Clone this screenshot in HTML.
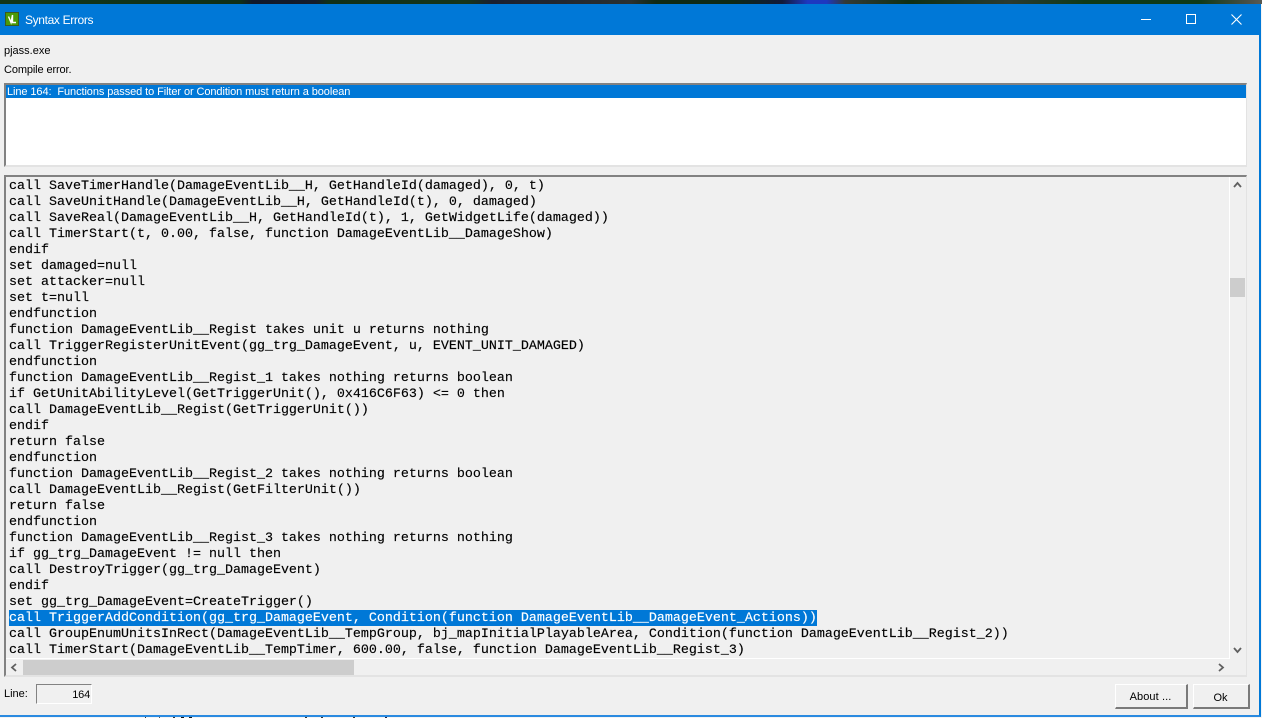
<!DOCTYPE html>
<html><head><meta charset="utf-8"><style>
html,body{margin:0;padding:0;width:1262px;height:718px;overflow:hidden;background:#f4f4f4}
div{position:absolute;box-sizing:border-box}
.ui{font:11px/14px "Liberation Sans",sans-serif;color:#000;white-space:pre}
#code div{left:0;height:16px;font:13.33px/18px "Liberation Mono",monospace;white-space:pre;color:#000;-webkit-text-stroke:.15px #000}
</style></head><body>
<div style="left:0;top:0;width:1262px;height:4px;background:linear-gradient(90deg,#12361a 0,#0f3018 19%,#10182a 20%,#141c2c 25%,#103018 26%,#15351b 37%,#1a2030 39%,#2a3030 50%,#0f2a14 52%,#0d2a16 58%,#121a3a 62%,#1d38c0 64%,#1d38c0 65.5%,#333a36 67%,#0e3015 72%,#2a3a30 80%,#0e3a18 86%,#0e3a18 95%,#4a5048 99%,#5a5a52 100%)"></div>
<div style="left:0;top:4px;width:1261px;height:713px;background:#f0f0f0;border-right:2px solid #0078d7;border-bottom:2px solid #2a8ae0"></div>
<div style="left:0;top:4px;width:1261px;height:31px;background:#0078d7"></div>
<div style="left:145px;top:717px;width:1px;height:1px;background:#333"></div>
<div style="left:159px;top:717px;width:1px;height:1px;background:#555"></div>
<div style="left:173px;top:717px;width:2px;height:1px;background:#333"></div>
<div style="left:181px;top:717px;width:3px;height:1px;background:#111"></div>
<div style="left:189px;top:717px;width:3px;height:1px;background:#111"></div>
<div style="left:305px;top:717px;width:2px;height:1px;background:#333"></div>
<div style="left:321px;top:717px;width:2px;height:1px;background:#333"></div>
<div style="left:353px;top:717px;width:2px;height:1px;background:#333"></div>
<div style="left:385px;top:717px;width:2px;height:1px;background:#224"></div>
<svg style="position:absolute;left:5px;top:12px" width="14" height="14" viewBox="0 0 14 14"><rect width="14" height="14" fill="#4a9a08"/><rect x=".5" y=".5" width="13" height="13" fill="none" stroke="#3a5a20"/><path d="M3.500 4.500l2.500 6 1.500-7.500v7.500h3.500" stroke="#fff" stroke-width="1.400" fill="none"/></svg>
<div class="ui" style="left:25px;top:12px;color:#fff;font-size:12px;line-height:16px;letter-spacing:-.35px">Syntax Errors</div>
<div style="left:1141px;top:19px;width:10px;height:1px;background:#fff"></div>
<div style="left:1186px;top:14px;width:10px;height:10px;border:1px solid #fff"></div>
<svg style="position:absolute;left:1231px;top:14px" width="11" height="11" viewBox="0 0 11 11"><path d="M.5.5l10 10M10.500.5l-10 10" stroke="#fff" stroke-width="1.100"/></svg>
<div class="ui" style="left:4px;top:44px">pjass.exe</div>
<div class="ui" style="left:4px;top:63px;letter-spacing:-.12px">Compile error.</div>

<div style="left:4px;top:83px;width:1243px;height:84px;background:#fff;border:2px solid #e3e3e3;border-top-color:#828282;border-left-color:#828282;border-right-width:1px"></div>
<div style="left:6px;top:85px;width:1240px;height:13px;background:#0078d7"></div>
<div class="ui" style="left:7px;top:85px;color:#fff;line-height:14px;letter-spacing:-.09px">Line 164:  Functions passed to Filter or Condition must return a boolean</div>

<div style="left:4px;top:175px;width:1243px;height:502px;background:#f0f0f0;border:2px solid #e3e3e3;border-top-color:#828282;border-left-color:#828282;border-right-width:1px"></div>
<div id="code" style="left:9px;top:178px;width:1219px;height:480px;overflow:hidden">
<div style="top:0">call SaveTimerHandle(DamageEventLib__H, GetHandleId(damaged), 0, t)</div>
<div style="top:16px">call SaveUnitHandle(DamageEventLib__H, GetHandleId(t), 0, damaged)</div>
<div style="top:32px">call SaveReal(DamageEventLib__H, GetHandleId(t), 1, GetWidgetLife(damaged))</div>
<div style="top:48px">call TimerStart(t, 0.00, false, function DamageEventLib__DamageShow)</div>
<div style="top:64px">endif</div>
<div style="top:80px">set damaged=null</div>
<div style="top:96px">set attacker=null</div>
<div style="top:112px">set t=null</div>
<div style="top:128px">endfunction</div>
<div style="top:144px">function DamageEventLib__Regist takes unit u returns nothing</div>
<div style="top:160px">call TriggerRegisterUnitEvent(gg_trg_DamageEvent, u, EVENT_UNIT_DAMAGED)</div>
<div style="top:176px">endfunction</div>
<div style="top:192px">function DamageEventLib__Regist_1 takes nothing returns boolean</div>
<div style="top:208px">if GetUnitAbilityLevel(GetTriggerUnit(), 0x416C6F63) &lt;= 0 then</div>
<div style="top:224px">call DamageEventLib__Regist(GetTriggerUnit())</div>
<div style="top:240px">endif</div>
<div style="top:256px">return false</div>
<div style="top:272px">endfunction</div>
<div style="top:288px">function DamageEventLib__Regist_2 takes nothing returns boolean</div>
<div style="top:304px">call DamageEventLib__Regist(GetFilterUnit())</div>
<div style="top:320px">return false</div>
<div style="top:336px">endfunction</div>
<div style="top:352px">function DamageEventLib__Regist_3 takes nothing returns nothing</div>
<div style="top:368px">if gg_trg_DamageEvent != null then</div>
<div style="top:384px">call DestroyTrigger(gg_trg_DamageEvent)</div>
<div style="top:400px">endif</div>
<div style="top:416px">set gg_trg_DamageEvent=CreateTrigger()</div>
<div style="top:432px;background:#0078d7;color:#fff;width:808px;-webkit-text-stroke:.15px #fff">call TriggerAddCondition(gg_trg_DamageEvent, Condition(function DamageEventLib__DamageEvent_Actions))</div>
<div style="top:448px">call GroupEnumUnitsInRect(DamageEventLib__TempGroup, bj_mapInitialPlayableArea, Condition(function DamageEventLib__Regist_2))</div>
<div style="top:464px">call TimerStart(DamageEventLib__TempTimer, 600.00, false, function DamageEventLib__Regist_3)</div>
</div>
<!-- scrollbars -->
<div style="left:1229px;top:177px;width:1px;height:481px;background:#fff"></div>
<div style="left:6px;top:658px;width:1224px;height:1px;background:#fff"></div>
<div style="left:1230px;top:278px;width:15px;height:19px;background:#cdcdcd"></div>
<svg style="position:absolute;left:1233px;top:181px" width="9" height="7" viewBox="0 0 9 7"><path d="M1 6l3.500-4L8 6" fill="none" stroke="#606060" stroke-width="1.800"/></svg>
<svg style="position:absolute;left:1233px;top:647px" width="9" height="7" viewBox="0 0 9 7"><path d="M1 1l3.500 4L8 1" fill="none" stroke="#606060" stroke-width="1.800"/></svg>
<svg style="position:absolute;left:10px;top:663px" width="7" height="9" viewBox="0 0 7 9"><path d="M6 1L2 4.500 6 8" fill="none" stroke="#606060" stroke-width="1.800"/></svg>
<svg style="position:absolute;left:1218px;top:663px" width="7" height="9" viewBox="0 0 7 9"><path d="M1 1l4 3.500L1 8" fill="none" stroke="#606060" stroke-width="1.800"/></svg>
<div style="left:23px;top:660px;width:331px;height:15px;background:#cdcdcd"></div>

<div class="ui" style="left:4px;top:687px">Line:</div>
<div style="left:36px;top:684px;width:56px;height:20px;background:#f0f0f0;border:1px solid #fff;border-top:1px solid #828282;border-left:1px solid #828282"></div>
<div class="ui" style="left:40px;top:688px;width:50px;text-align:right;letter-spacing:-.2px">164</div>
<div style="left:1115px;top:684px;width:73px;height:25px;background:#f0f0f0;border:1px solid #fff;border-right:2px solid #7a7a7a;border-bottom:2px solid #7a7a7a"></div>
<div class="ui" style="left:1114px;top:690px;width:73px;text-align:center;letter-spacing:.1px">About ...</div>
<div style="left:1193px;top:684px;width:57px;height:25px;background:#f0f0f0;border:1px solid #fff;border-right:2px solid #7a7a7a;border-bottom:2px solid #7a7a7a"></div>
<div class="ui" style="left:1192px;top:691px;width:57px;text-align:center">Ok</div>
</body></html>
